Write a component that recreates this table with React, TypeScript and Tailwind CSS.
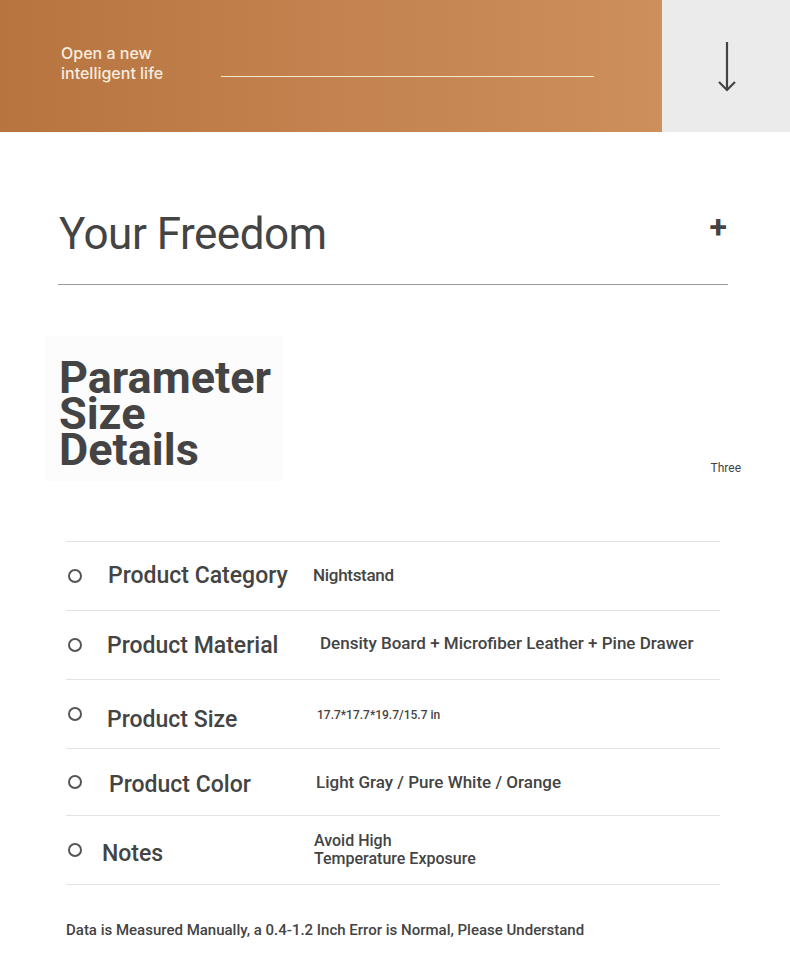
const rows = [
  { label: 'Product Category', value: 'Nightstand', lx: 'pl-[42px]', vx: 'pl-[247px]', vcls: 'text-[17px] tracking-[-0.3px]', ly: '', vy: '', h: 'h-[69px]' },
  { label: 'Product Material', value: 'Density Board + Microfiber Leather + Pine Drawer', lx: 'pl-[41px]', vx: 'pl-[254px]', vcls: 'text-[17px]', ly: 'mt-[3px]', vy: '-mt-[2px]', h: 'h-[69px]' },
  { label: 'Product Size', value: '17.7*17.7*19.7/15.7 in', lx: 'pl-[41px]', vx: 'pl-[251px]', vcls: 'text-[12px]', ly: 'mt-[12px]', vy: 'mt-[1px]', h: 'h-[69px]' },
  { label: 'Product Color', value: 'Light Gray / Pure White / Orange', lx: 'pl-[43px]', vx: 'pl-[250px]', vcls: 'text-[17px]', ly: 'mt-[6px]', vy: 'mt-[2px]', h: 'h-[67px]' },
  { label: 'Notes', value: 'Avoid High\nTemperature Exposure', lx: 'pl-[36px]', vx: 'pl-[248px]', vcls: 'text-[16px] leading-[18px]', ly: 'mt-[9px]', vy: '', h: 'h-[69px]' },
];

export default function App() {
  return (
    <div className="w-[790px] bg-white font-['Roboto',sans-serif] text-[#444]">
      {/* banner */}
      <div className="flex h-[132px]">
        <div className="relative w-[662px] bg-gradient-to-r from-[#b7743f] via-[#c3824f] to-[#cd8f5c] flex items-center">
          <div className="pl-[61px] -mt-[7px] text-[16px] leading-[20px] text-[#f6ecdf] font-['Inter',sans-serif] font-medium">
            Open a new<br />intelligent life
          </div>
          <div className="absolute left-[221px] top-[76px] w-[373px] h-px bg-[#f5e8cc]" />
        </div>
        <div className="flex-1 bg-[#ebebeb] flex items-center justify-center">
          <svg width="20" height="52" viewBox="0 0 20 52" className="ml-[2px] mt-[2px]">
            <path d="M10 1 V49" stroke="#444" strokeWidth="2.2" fill="none" />
            <path d="M2 41 L10 49 L18 41" stroke="#444" strokeWidth="2.2" fill="none" />
          </svg>
        </div>
      </div>

      {/* accordion title */}
      <div className="ml-[58px] mr-[62px] mt-[76px] border-b border-[#9a9a9a] flex items-start justify-between pb-[24px]">
        <div className="text-[44px] leading-[52px] pl-px tracking-[-0.5px]">Your Freedom</div>
        <div className="text-[32px] font-bold leading-[36px] mr-[1px] mt-[1px]">+</div>
      </div>

      {/* parameter header */}
      <div className="flex items-end justify-between mt-[51px] pl-[46px] pr-[49px]">
        <div className="bg-[#fcfcfc] w-[237px] h-[145px] pl-[13px] pt-[24px] text-[45px] font-bold leading-[36px]">
          Parameter<br />Size<br />Details
        </div>
        <div className="text-[12px] mb-[4px]">Three</div>
      </div>

      {/* table */}
      <div className="ml-[66px] mr-[70px] mt-[60px] border-t border-[#e3e3e3]">
        {rows.map((r) => (
          <div key={r.label} className={`relative ${r.h} border-b border-[#e3e3e3] flex items-center`}>
            <div className="absolute left-[2px] w-[14px] h-[14px] rounded-full border-2 border-[#555]" />
            <div className={`absolute left-0 ${r.lx} ${r.ly} text-[23px] font-medium whitespace-nowrap`}>{r.label}</div>
            <div className={`absolute left-0 ${r.vx} ${r.vy} ${r.vcls} font-medium whitespace-pre`}>{r.value}</div>
          </div>
        ))}
      </div>

      <div className="pl-[66px] mt-[34px] text-[15px] font-medium pb-[20px]">
        Data is Measured Manually, a 0.4-1.2 Inch Error is Normal, Please Understand
      </div>
    </div>
  );
}
